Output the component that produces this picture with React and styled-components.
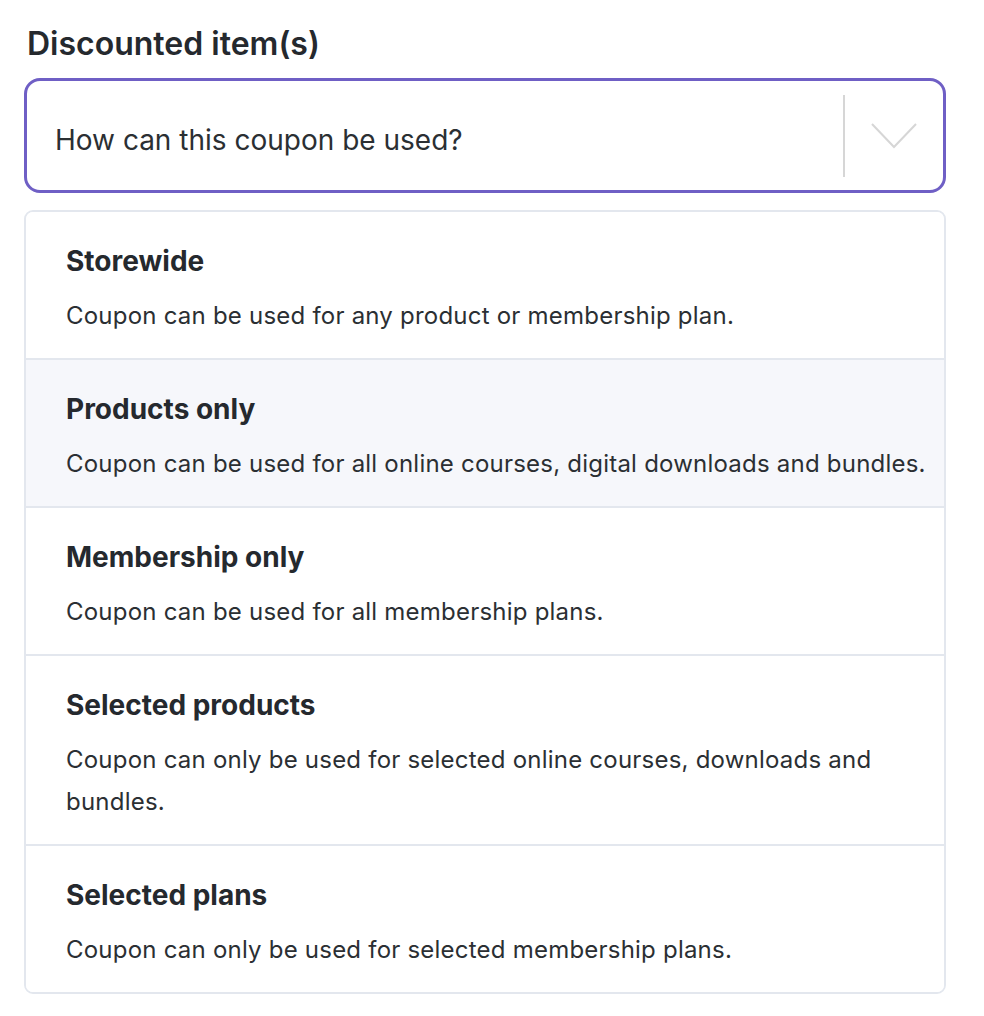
import React from "react";
import styled, { createGlobalStyle } from "styled-components";

const Global = createGlobalStyle`
  html, body { margin: 0; padding: 0; background: #ffffff; }
  body { font-family: Inter, "Noto Sans", sans-serif; color: #25292e; }
`;

const Page = styled.div`
  padding: 24px 0 0 24px;
  width: 922px;
`;

const Label = styled.div`
  font-size: 32px;
  font-weight: 600;
  line-height: 40px;
  margin: 0 0 14px 3px;
  color: #25292e;
`;

const Select = styled.div`
  box-sizing: border-box;
  height: 115px;
  border: 3px solid #6f5fc5;
  border-radius: 16px;
  display: flex;
  align-items: center;
  padding-left: 28px;
  background: #fff;
`;

const Placeholder = styled.div`
  flex: 1;
  font-size: 28px;
  line-height: 32px;
  padding-top: 8px;
  color: #2b2f33;
`;

const Indicators = styled.div`
  display: flex;
  align-items: center;
  height: 100%;
`;

const Separator = styled.div`
  width: 2px;
  height: 82px;
  background: #d6d6d6;
`;

const Chevron = styled.div`
  width: 98px;
  display: flex;
  justify-content: center;
  align-items: center;
`;

const Menu = styled.div`
  margin-top: 17px;
  border: 2px solid #e3e7ee;
  border-radius: 9px;
  overflow: hidden;
  background: #fff;
`;

const Option = styled.div`
  padding: 31px 16px 21px 40px;
  background: ${(p) => (p.$active ? "#f6f7fb" : "#ffffff")};
  & + & { border-top: 2px solid #e3e7ee; }
`;

const OptionTitle = styled.div`
  font-size: 28px;
  font-weight: 700;
  line-height: 36px;
  margin-bottom: 16px;
  color: #25292e;
`;

const OptionDesc = styled.div`
  font-size: 24px;
  letter-spacing: 0.22px;
  line-height: 42px;
  color: #2b2f33;
`;

const options = [
  { title: "Storewide", desc: "Coupon can be used for any product or membership plan." },
  { title: "Products only", desc: "Coupon can be used for all online courses, digital downloads and bundles.", active: true },
  { title: "Membership only", desc: "Coupon can be used for all membership plans." },
  { title: "Selected products", desc: "Coupon can only be used for selected online courses, downloads and bundles." },
  { title: "Selected plans", desc: "Coupon can only be used for selected membership plans." },
];

export default function App() {
  return (
    <>
      <Global />
      <Page>
        <Label>Discounted item(s)</Label>
        <Select>
          <Placeholder>How can this coupon be used?</Placeholder>
          <Indicators>
            <Separator />
            <Chevron>
              <svg width="48" height="28" viewBox="0 0 48 28" fill="none">
                <path d="M2 2 L24 25 L46 2" stroke="#d6d6d6" strokeWidth="2" />
              </svg>
            </Chevron>
          </Indicators>
        </Select>
        <Menu>
          {options.map((o) => (
            <Option key={o.title} $active={o.active}>
              <OptionTitle>{o.title}</OptionTitle>
              <OptionDesc>{o.desc}</OptionDesc>
            </Option>
          ))}
        </Menu>
      </Page>
    </>
  );
}
